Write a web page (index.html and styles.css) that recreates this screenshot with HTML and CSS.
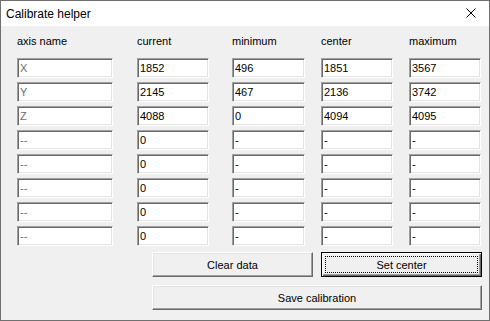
FILE: index.html
```html
<!DOCTYPE html>
<html>
<head>
<meta charset="utf-8" />
<title>Calibrate helper</title>
<link rel="stylesheet" href="styles.css">
</head>
<body>
<div class="win">
  <div class="titlebar">
    <span class="title">Calibrate helper</span>
    <span class="close"><svg width="10" height="10" viewBox="0 0 10 10"><path d="M0.5 0.5L9.5 9.5M9.5 0.5L0.5 9.5" stroke="#000" stroke-width="1" fill="none"/></svg></span>
  </div>
  <div class="client">
    <div class="grid">
      <div class="hd">axis name</div>
      <div class="hd">current</div>
      <div class="hd">minimum</div>
      <div class="hd">center</div>
      <div class="hd">maximum</div>

      <input class="ed c1 dis" value="X" readonly /><input class="ed c2" value="1852" readonly /><input class="ed c3" value="496" readonly /><input class="ed c4" value="1851" readonly /><input class="ed c5" value="3567" readonly />
      <input class="ed c1 dis" value="Y" readonly /><input class="ed c2" value="2145" readonly /><input class="ed c3" value="467" readonly /><input class="ed c4" value="2136" readonly /><input class="ed c5" value="3742" readonly />
      <input class="ed c1 dis" value="Z" readonly /><input class="ed c2" value="4088" readonly /><input class="ed c3" value="0" readonly /><input class="ed c4" value="4094" readonly /><input class="ed c5" value="4095" readonly />
      <input class="ed c1 dis" value="--" readonly /><input class="ed c2" value="0" readonly /><input class="ed c3" value="-" readonly /><input class="ed c4" value="-" readonly /><input class="ed c5" value="-" readonly />
      <input class="ed c1 dis" value="--" readonly /><input class="ed c2" value="0" readonly /><input class="ed c3" value="-" readonly /><input class="ed c4" value="-" readonly /><input class="ed c5" value="-" readonly />
      <input class="ed c1 dis" value="--" readonly /><input class="ed c2" value="0" readonly /><input class="ed c3" value="-" readonly /><input class="ed c4" value="-" readonly /><input class="ed c5" value="-" readonly />
      <input class="ed c1 dis" value="--" readonly /><input class="ed c2" value="0" readonly /><input class="ed c3" value="-" readonly /><input class="ed c4" value="-" readonly /><input class="ed c5" value="-" readonly />
      <input class="ed c1 dis" value="--" readonly /><input class="ed c2" value="0" readonly /><input class="ed c3" value="-" readonly /><input class="ed c4" value="-" readonly /><input class="ed c5" value="-" readonly />
    </div>
    <div class="buttons">
      <button class="btn">Clear data</button>
      <button class="btn def"><span class="focus">Set center</span></button>
      <button class="btn wide">Save calibration</button>
    </div>
  </div>
</div>
</body>
</html>
```

FILE: styles.css
```css
*{box-sizing:border-box;}
body{margin:0;font-family:"Liberation Sans",Arial,sans-serif;font-size:11px;color:#000;background:#f0f0f0;}
.win{width:490px;height:321px;border:1px solid #707070;background:#f0f0f0;display:flex;flex-direction:column;overflow:hidden;}
.titlebar{height:25px;background:#fff;display:flex;align-items:center;justify-content:space-between;padding:0 13px 0 5px;}
.title{font-size:12px;line-height:25px;padding-top:1px;}
.close{display:flex;margin-top:-2px;}
.client{flex:1;padding:9px 0 0 16px;}
.grid{display:grid;grid-template-columns:120px 95px 89px 88px 72px;row-gap:4px;}
.hd{height:13px;line-height:13px;margin-bottom:6px;}
.ed{height:20px;border:1px solid;border-color:#a0a0a0 #fff #fff #a0a0a0;box-shadow:inset 1px 1px 0 #696969,inset -1px -1px 0 #e3e3e3;background:#fff;font-family:"Liberation Sans",Arial,sans-serif;font-size:11px;color:#000;padding:0 0 0 2px;margin:0;outline:none;}
.c1{width:96px;}
.c2{width:72px;}
.c3{width:73px;}
.c4{width:72px;}
.c5{width:72px;}
.dis{color:#6d6d6d;}
.buttons{display:grid;grid-template-columns:161px 161px;column-gap:8px;row-gap:8px;margin:6px 0 0 135px;}
.btn{height:25px;border:1px solid;border-color:#fff #696969 #696969 #fff;box-shadow:inset -1px -1px 0 #a0a0a0,inset 1px 1px 0 #e3e3e3;background:#f0f0f0;font-family:"Liberation Sans",Arial,sans-serif;font-size:11px;color:#000;padding:0;margin:0;}
.def{border:1px solid #000;box-shadow:inset 1px 1px 0 #fff,inset -1px -1px 0 #696969,inset -2px -2px 0 #a0a0a0;padding:3px;display:flex;}
.focus{flex:1;border:1px dotted #000;display:flex;align-items:center;justify-content:center;}
.wide{grid-column:1 / span 2;}
```
